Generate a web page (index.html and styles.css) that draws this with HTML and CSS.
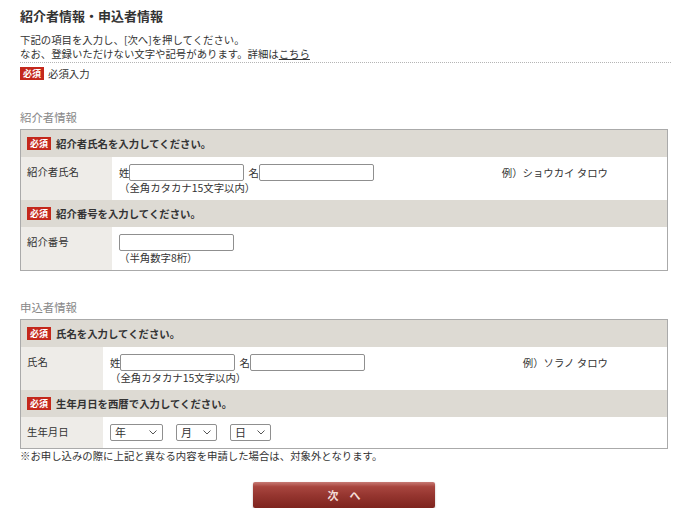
FILE: index.html
```html
<!DOCTYPE html>
<html lang="ja">
<head>
    <meta charset="UTF-8">
    <meta name="viewport" content="width=device-width, initial-scale=1.0">
    <title>紹介者情報・申込者情報</title>
    <link rel="stylesheet" href="styles.css">
</head>
<body>
    <div class="page">
        <h1 class="page-title">紹介者情報・申込者情報</h1>
        <div class="intro">
            <p>下記の項目を入力し、[次へ]を押してください。</p>
            <p>なお、登録いただけない文字や記号があります。詳細は<a href="#">こちら</a></p>
        </div>
        <p class="legend"><span class="badge">必須</span>必須入力</p>

        <!-- 紹介者情報 -->
        <h2 class="section-title">紹介者情報</h2>
        <table class="form-table">
            <colgroup>
                <col class="col-label-wide">
                <col>
            </colgroup>
            <tr class="head-row">
                <th colspan="2"><span class="badge">必須</span>紹介者氏名を入力してください。</th>
            </tr>
            <tr>
                <td class="label">紹介者氏名</td>
                <td class="field">
                    <div class="field-line">
                        <label class="name-input">姓<input type="text"></label>
                        <label class="name-input">名<input type="text"></label>
                        <span class="example">例）ショウカイ タロウ</span>
                    </div>
                    <p class="hint">（全角カタカナ15文字以内）</p>
                </td>
            </tr>
            <tr class="head-row">
                <th colspan="2"><span class="badge">必須</span>紹介番号を入力してください。</th>
            </tr>
            <tr>
                <td class="label">紹介番号</td>
                <td class="field">
                    <div class="field-line">
                        <input type="text">
                    </div>
                    <p class="hint">（半角数字8桁）</p>
                </td>
            </tr>
        </table>

        <!-- 申込者情報 -->
        <h2 class="section-title section-title-next">申込者情報</h2>
        <table class="form-table">
            <colgroup>
                <col class="col-label">
                <col>
            </colgroup>
            <tr class="head-row">
                <th colspan="2"><span class="badge">必須</span>氏名を入力してください。</th>
            </tr>
            <tr>
                <td class="label">氏名</td>
                <td class="field">
                    <div class="field-line">
                        <label class="name-input">姓<input type="text"></label>
                        <label class="name-input">名<input type="text"></label>
                        <span class="example">例）ソラノ タロウ</span>
                    </div>
                    <p class="hint">（全角カタカナ15文字以内）</p>
                </td>
            </tr>
            <tr class="head-row">
                <th colspan="2"><span class="badge">必須</span>生年月日を西暦で入力してください。</th>
            </tr>
            <tr>
                <td class="label">生年月日</td>
                <td class="field field-date">
                    <div class="date-line">
                        <span class="select-box select-year">
                            <select><option>年</option></select>
                            <svg class="chevron" width="8" height="5" viewBox="0 0 8 5"><path d="M0.5 0.5 L4 4 L7.5 0.5" fill="none" stroke="#555" stroke-width="1"/></svg>
                        </span>
                        <span class="select-box">
                            <select><option>月</option></select>
                            <svg class="chevron" width="8" height="5" viewBox="0 0 8 5"><path d="M0.5 0.5 L4 4 L7.5 0.5" fill="none" stroke="#555" stroke-width="1"/></svg>
                        </span>
                        <span class="select-box">
                            <select><option>日</option></select>
                            <svg class="chevron" width="8" height="5" viewBox="0 0 8 5"><path d="M0.5 0.5 L4 4 L7.5 0.5" fill="none" stroke="#555" stroke-width="1"/></svg>
                        </span>
                    </div>
                </td>
            </tr>
        </table>
        <p class="note">※お申し込みの際に上記と異なる内容を申請した場合は、対象外となります。</p>

        <button class="btn-next" type="button">次　へ</button>
    </div>
</body>
</html>
```

FILE: styles.css
```css
body {
    margin: 0;
    font-family: "Noto Sans CJK JP", "Noto Sans", sans-serif;
    font-size: 10.4px;
    color: #333;
    background-color: #fff;
}
.page {
    width: 648px;
    padding: 8px 20px 0;
}
p {
    margin: 0;
}
.page-title {
    font-size: 13px;
    line-height: 16px;
    font-weight: bold;
    margin: 0 0 9px;
}
.intro {
    line-height: 14px;
    padding-bottom: 1px;
    border-bottom: 1px dotted #b5b5b5;
    width: 651px;
}
.intro a {
    color: #333;
    text-decoration: underline;
}
.legend {
    margin-top: 4px;
    line-height: 13px;
}
.legend .badge {
    margin-right: 4px;
}
.badge {
    display: inline-block;
    vertical-align: top;
    background-color: #c4281c;
    color: #fff;
    font-size: 9px;
    font-weight: bold;
    line-height: 13px;
    padding: 0 3px;
}
.section-title {
    font-size: 11.4px;
    font-weight: normal;
    color: #888;
    line-height: 14px;
    margin: 30px 0 5px;
}
.section-title-next {
    margin-top: 29px;
}
.form-table {
    width: 648px;
    table-layout: fixed;
    border-collapse: separate;
    border-spacing: 0;
    border: 1px solid #aaa;
}
.col-label-wide {
    width: 91px;
}
.col-label {
    width: 82px;
}
.head-row th {
    height: 27px;
    padding: 0 6px;
    background-color: #dddad3;
    text-align: left;
    font-weight: bold;
    vertical-align: middle;
}
.head-row th .badge {
    vertical-align: middle;
    margin-right: 5px;
    position: relative;
    top: -1px;
}
.label {
    background-color: #eeece8;
    vertical-align: top;
    padding: 8px 6px 0;
    line-height: 13px;
}
.field {
    padding: 7px 7px 6px;
    vertical-align: top;
}
.field-date {
    padding-bottom: 7px;
}
.field-line {
    display: flex;
    align-items: center;
    height: 17px;
}
.name-input {
    display: flex;
    align-items: center;
    margin-right: 4px;
}
input[type="text"] {
    box-sizing: border-box;
    width: 115px;
    height: 17px;
    margin: 0;
    padding: 0 2px;
    border: 1px solid #8f8f8f;
    border-radius: 2px;
    background: #fff;
}
.example {
    margin-left: auto;
    margin-right: 52px;
}
.hint {
    line-height: 13px;
}
.date-line {
    display: flex;
    gap: 13px;
}
.select-box {
    position: relative;
    display: block;
    width: 41px;
    height: 17px;
}
.select-year {
    width: 53px;
}
.select-box select {
    -webkit-appearance: none;
    appearance: none;
    box-sizing: border-box;
    width: 100%;
    height: 17px;
    margin: 0;
    padding: 0 0 0 4px;
    border: 1px solid #8f8f8f;
    border-radius: 2px;
    background: #fff;
    font-family: "Noto Sans CJK JP", sans-serif;
    font-size: 11px;
    line-height: 15px;
    color: #333;
}
.chevron {
    position: absolute;
    right: 6px;
    top: 6px;
    pointer-events: none;
}
.note {
    line-height: 13px;
}
.btn-next {
    display: block;
    width: 182px;
    height: 26px;
    margin: 20px auto 0;
    border: none;
    border-radius: 2px;
    background: linear-gradient(#c77a74 0%, #a8463f 18%, #963630 50%, #7e241e 100%);
    box-shadow: 0 1px 2px rgba(0, 0, 0, 0.3);
    color: #f4ddd7;
    font-family: "Noto Sans CJK JP", sans-serif;
    font-size: 11px;
    font-weight: bold;
    cursor: pointer;
}
```
